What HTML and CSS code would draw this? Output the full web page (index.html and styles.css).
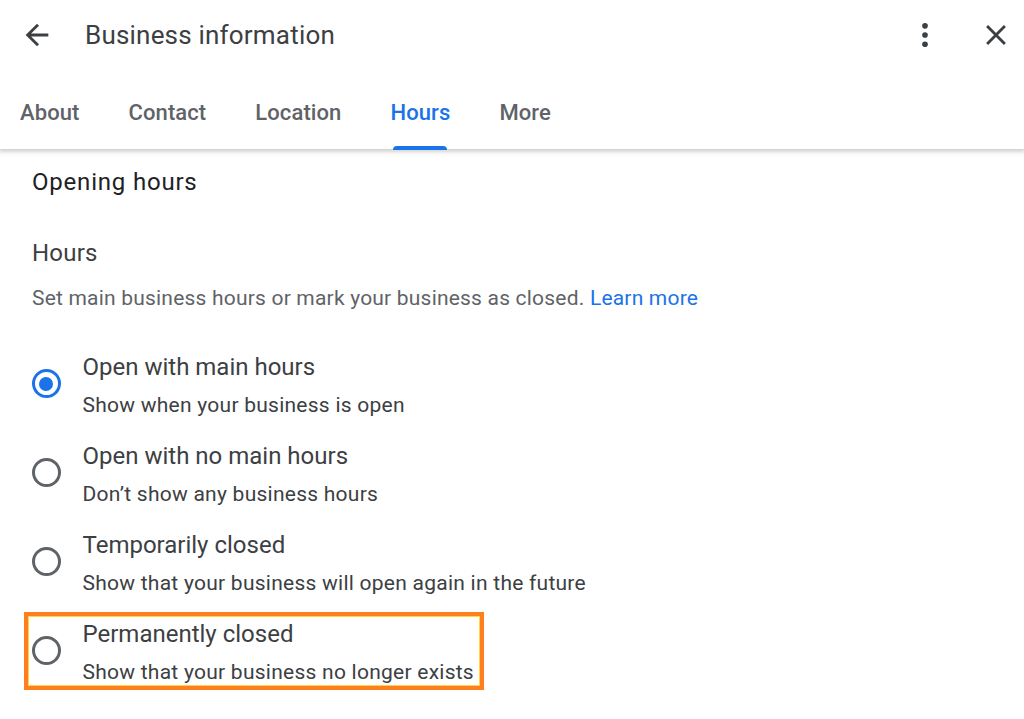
FILE: index.html
```html
<!DOCTYPE html>
<html>
<head>
<meta charset="utf-8">
<link rel="stylesheet" href="styles.css">
</head>
<body>
<div class="header">
  <div class="topbar">
    <button class="icon-btn back" aria-label="Back">
      <svg viewBox="0 0 24 24" width="34" height="34"><path d="M20 11H7.83l5.59-5.59L12 4l-8 8 8 8 1.41-1.41L7.83 13H20v-2z" fill="#3c4043"/></svg>
    </button>
    <div class="title">Business information</div>
    <button class="icon-btn kebab" aria-label="More">
      <svg viewBox="0 0 24 24" width="34" height="34"><circle cx="12" cy="5.5" r="2" fill="#3c4043"/><circle cx="12" cy="12" r="2" fill="#3c4043"/><circle cx="12" cy="18.5" r="2" fill="#3c4043"/></svg>
    </button>
    <button class="icon-btn close" aria-label="Close">
      <svg viewBox="0 0 24 24" width="34" height="34"><path d="M19 6.41L17.59 5 12 10.59 6.41 5 5 6.41 10.59 12 5 17.59 6.41 19 12 13.41 17.59 19 19 17.59 13.41 12z" fill="#3c4043"/></svg>
    </button>
  </div>
  <div class="tabs">
    <div class="tab">About</div>
    <div class="tab">Contact</div>
    <div class="tab">Location</div>
    <div class="tab active">Hours</div>
    <div class="tab">More</div>
  </div>
</div>
<div class="content">
  <div class="section-title">Opening hours</div>
  <div class="sub-title">Hours</div>
  <div class="desc">Set main business hours or mark your business as closed. <a class="link">Learn more</a></div>
  <div class="options">
    <div class="option">
      <span class="radio checked"></span>
      <div class="opt-text">
        <div class="opt-title">Open with main hours</div>
        <div class="opt-sub">Show when your business is open</div>
      </div>
    </div>
    <div class="option">
      <span class="radio"></span>
      <div class="opt-text">
        <div class="opt-title">Open with no main hours</div>
        <div class="opt-sub">Don’t show any business hours</div>
      </div>
    </div>
    <div class="option">
      <span class="radio"></span>
      <div class="opt-text">
        <div class="opt-title">Temporarily closed</div>
        <div class="opt-sub">Show that your business will open again in the future</div>
      </div>
    </div>
    <div class="option highlight">
      <span class="radio"></span>
      <div class="opt-text">
        <div class="opt-title">Permanently closed</div>
        <div class="opt-sub">Show that your business no longer exists</div>
      </div>
    </div>
  </div>
</div>
</body>
</html>
```
FILE: styles.css
```css
* { box-sizing: border-box; }
html, body { margin: 0; padding: 0; background: #fff; }
body {
  font-family: Roboto, "Liberation Sans", sans-serif;
  color: #3c4043;
  width: 1024px;
  height: 719px;
  overflow: hidden;
}
.header {
  height: 150px;
  border-bottom: 1px solid #d6d6d6;
  box-shadow: 0 2px 3px rgba(60,64,67,0.18);
  position: relative;
  z-index: 1;
}
.topbar {
  height: 70px;
  display: flex;
  align-items: center;
}
.icon-btn {
  border: 0;
  background: none;
  padding: 0;
  width: 34px;
  height: 34px;
  display: flex;
  align-items: center;
  justify-content: center;
}
.back { margin-left: 20px; }
.title {
  margin-left: 31px;
  font-size: 26px;
  color: #3c4043;
  flex: 1;
  letter-spacing: 0.2px;
}
.kebab { margin-right: 37px; }
.close { margin-right: 11px; }
.tabs {
  display: flex;
  height: 80px;
  padding-left: 20px;
  gap: 49px;
}
.tab {
  font-size: 22px;
  font-weight: 500;
  color: #5f6368;
  display: flex;
  align-items: center;
  position: relative;
  height: 80px;
  padding-top: 4px;
  letter-spacing: 0.1px;
}
.tab.active { color: #1a73e8; }
.tab.active::after {
  content: "";
  position: absolute;
  left: 3px;
  right: 3px;
  bottom: 0;
  height: 4px;
  background: #1a73e8;
  border-radius: 4px 4px 0 0;
}
.content {
  padding: 18px 0 0 32px;
  background: linear-gradient(#f7f7f7, #fff 8px);
}
.section-title {
  font-size: 24px;
  color: #202124;
  line-height: 28px;
  letter-spacing: 0.8px;
}
.sub-title {
  font-size: 24px;
  line-height: 28px;
  margin-top: 43px;
  color: #3c4043;
  letter-spacing: 0.2px;
}
.desc {
  font-size: 21px;
  line-height: 24px;
  margin-top: 19px;
  color: #5f6368;
  letter-spacing: 0.2px;
}
.link { color: #1a73e8; }
.options {
  margin-top: 29px;
  margin-left: -8px;
  display: flex;
  flex-direction: column;
}
.option {
  display: flex;
  align-items: center;
  height: 89px;
  border: 4px solid transparent;
  align-self: flex-start;
  padding-right: 6px;
}
.option.highlight {
  border-color: #ff7f1f;
  box-shadow: inset 0 0 0 1px #ffd34a;
  height: 78px;
  margin-top: 5.5px;
}
.radio {
  width: 29px;
  height: 29px;
  border: 3px solid #5f6368;
  border-radius: 50%;
  margin-left: 3.5px;
  margin-right: 22px;
  flex: none;
  position: relative;
}
.radio.checked { border-color: #1a73e8; }
.radio.checked::after {
  content: "";
  position: absolute;
  left: 50%;
  top: 50%;
  width: 14px;
  height: 14px;
  margin: -7px 0 0 -7px;
  background: #1a73e8;
  border-radius: 50%;
}
.opt-text { display: flex; flex-direction: column; padding-top: 3px; }
.opt-title {
  font-size: 24px;
  line-height: 28px;
  color: #3c4043;
}
.opt-sub {
  font-size: 21px;
  line-height: 24px;
  margin-top: 12px;
  color: #3c4043;
  letter-spacing: 0.25px;
}
```
